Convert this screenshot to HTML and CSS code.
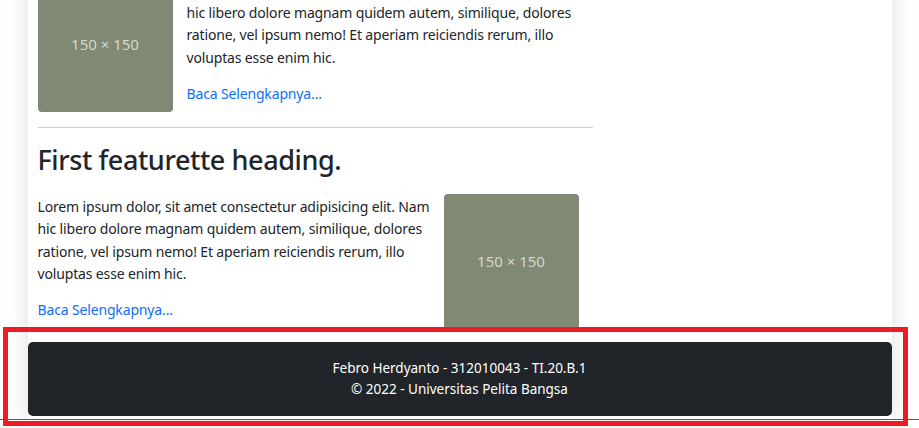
FILE: index.html
```html
<!DOCTYPE html>
<html lang="id">
<head>
<meta charset="utf-8">
<title>Artikel</title>
<link rel="stylesheet" href="styles.css">
</head>
<body>
<div class="page">
  <main class="content">
    <article class="feature feature--first">
      <div class="feature-row">
        <div class="thumb thumb--left"><span>150 × 150</span></div>
        <div class="feature-text">
          <p>Lorem ipsum dolor, sit amet consectetur adipisicing elit. Nam hic libero dolore magnam quidem autem, similique, dolores ratione, vel ipsum nemo! Et aperiam reiciendis rerum, illo voluptas esse enim hic.</p>
          <a class="more" href="#">Baca Selengkapnya...</a>
        </div>
      </div>
    </article>
    <hr class="divider">
    <article class="feature">
      <h2 class="feature-title">First featurette heading.</h2>
      <div class="feature-row">
        <div class="feature-text">
          <p>Lorem ipsum dolor, sit amet consectetur adipisicing elit. Nam hic libero dolore magnam quidem autem, similique, dolores ratione, vel ipsum nemo! Et aperiam reiciendis rerum, illo voluptas esse enim hic.</p>
          <a class="more" href="#">Baca Selengkapnya...</a>
        </div>
        <div class="thumb thumb--right"><span>150 × 150</span></div>
      </div>
    </article>
  </main>
  <footer class="site-footer">
    <p>Febro Herdyanto - 312010043 - TI.20.B.1</p>
    <p>© 2022 - Universitas Pelita Bangsa</p>
  </footer>
</div>
<div class="page-end"></div>
<div class="highlight"></div>
</body>
</html>
```

FILE: styles.css
```css
* { box-sizing: border-box; }

html, body {
  margin: 0;
  padding: 0;
  background: #ffffff;
  overflow: hidden;
}

body {
  position: relative;
  width: 919px;
  height: 428px;
  font-family: "Noto Sans", "Open Sans", sans-serif;
  color: #212529;
  font-size: 14px;
  line-height: 22.5px;
}

.page {
  width: 864px;
  margin: 0 auto;
  background: #ffffff;
  box-shadow: 0 0 22px rgba(0, 0, 0, 0.13);
  padding-bottom: 3px;
}

.content {
  width: 565px;
  padding-left: 10px;
}

.feature--first {
  margin-top: -23px;
}

.feature-row {
  display: flex;
  align-items: flex-start;
}

.feature-text {
  flex: 1;
  padding-top: 2px;
  letter-spacing: -0.15px;
}

.feature-text p {
  margin: 0 0 13.5px;
}

.more {
  color: #0d6efd;
  text-decoration: none;
}

.thumb {
  flex: 0 0 135px;
  width: 135px;
  height: 135px;
  background: #7f8973;
  border-radius: 4px;
  display: flex;
  align-items: center;
  justify-content: center;
  color: #d4d8cd;
  font-size: 15px;
}

.thumb--left { margin-right: 14px; }
.thumb--right { margin: 0 14px 0 14px; }

.divider {
  margin: 15px 0 15px;
  border: 0;
  border-top: 1px solid #cfcfcf;
  height: 0;
}

.feature-title {
  margin: 0 0 16px;
  font-size: 27px;
  font-weight: 500;
  line-height: 34.8px;
  letter-spacing: -0.4px;
}

.site-footer {
  margin-top: 13px;
  background: #212529;
  color: #ffffff;
  border-radius: 5px;
  padding: 16px 0;
  text-align: center;
  font-size: 13.5px;
  line-height: 21px;
}

.site-footer p { margin: 0; }

.page-end {
  height: 1px;
  background: #5c5c5c;
}

.highlight {
  position: absolute;
  left: 3px;
  top: 327px;
  width: 905px;
  height: 99px;
  border: 5px solid #ed1c24;
  pointer-events: none;
}
```
